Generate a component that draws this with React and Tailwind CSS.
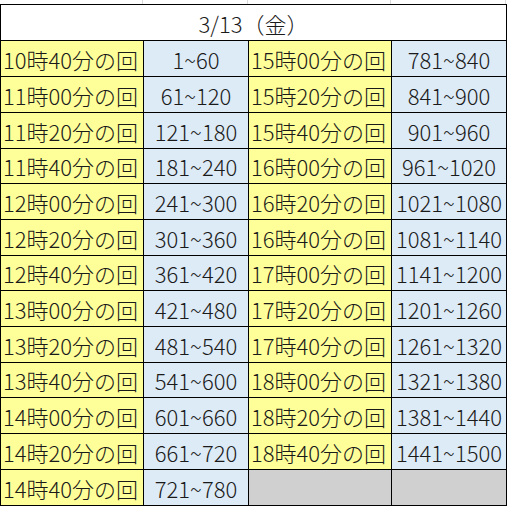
const left = [
  ['10時40分の回', '1~60'],
  ['11時00分の回', '61~120'],
  ['11時20分の回', '121~180'],
  ['11時40分の回', '181~240'],
  ['12時00分の回', '241~300'],
  ['12時20分の回', '301~360'],
  ['12時40分の回', '361~420'],
  ['13時00分の回', '421~480'],
  ['13時20分の回', '481~540'],
  ['13時40分の回', '541~600'],
  ['14時00分の回', '601~660'],
  ['14時20分の回', '661~720'],
  ['14時40分の回', '721~780'],
];

const right = [
  ['15時00分の回', '781~840'],
  ['15時20分の回', '841~900'],
  ['15時40分の回', '901~960'],
  ['16時00分の回', '961~1020'],
  ['16時20分の回', '1021~1080'],
  ['16時40分の回', '1081~1140'],
  ['17時00分の回', '1141~1200'],
  ['17時20分の回', '1201~1260'],
  ['17時40分の回', '1261~1320'],
  ['18時00分の回', '1321~1380'],
  ['18時20分の回', '1381~1440'],
  ['18時40分の回', '1441~1500'],
  null,
];

// row heights incl. bottom border, total 465
const heights = [36, 36, 36, 35, 36, 36, 35, 36, 36, 35, 36, 36, 36];

const font = { fontFamily: '"Noto Sans CJK JP", "Noto Sans", sans-serif' };

function Row({ l, r, h }) {
  return (
    <div className="flex" style={{ height: h }}>
      <div className="w-[143px] shrink-0 bg-[#ffff99] border-r border-b border-black flex items-center pl-[2px] whitespace-nowrap">
        {l[0]}
      </div>
      <div className="w-[105px] shrink-0 bg-[#ddebf7] border-r border-b border-black flex items-center justify-center whitespace-nowrap">
        {l[1]}
      </div>
      {r ? (
        <>
          <div className="w-[143px] shrink-0 bg-[#ffff99] border-r border-b border-black flex items-center pl-[2px] whitespace-nowrap">
            {r[0]}
          </div>
          <div className="w-[115px] shrink-0 bg-[#ddebf7] border-r border-b border-black flex items-center justify-center whitespace-nowrap">
            {r[1]}
          </div>
        </>
      ) : (
        <>
          <div className="w-[143px] shrink-0 bg-[#d0d0d0] border-r border-b border-black" />
          <div className="w-[115px] shrink-0 bg-[#d0d0d0] border-r border-b border-black" />
        </>
      )}
    </div>
  );
}

export default function App() {
  return (
    <div className="w-[511px] h-[510px] bg-white text-[#1a1a1a] text-[22px] font-light leading-none overflow-hidden" style={font}>
      <div className="flex h-[4px]">
        <div className="w-[143px] border-r border-[#dadada]" />
        <div className="w-[105px] border-r border-[#dadada]" />
        <div className="w-[143px] border-r border-[#dadada]" />
        <div className="w-[115px] border-r border-[#dadada]" />
      </div>
      <div className="w-[507px] border-l border-t border-black">
        <div className="h-[36px] border-r border-b border-black flex items-center justify-center">
          3/13（金）
        </div>
        {left.map((l, i) => (
          <Row key={i} l={l} r={right[i]} h={heights[i]} />
        ))}
      </div>
    </div>
  );
}
